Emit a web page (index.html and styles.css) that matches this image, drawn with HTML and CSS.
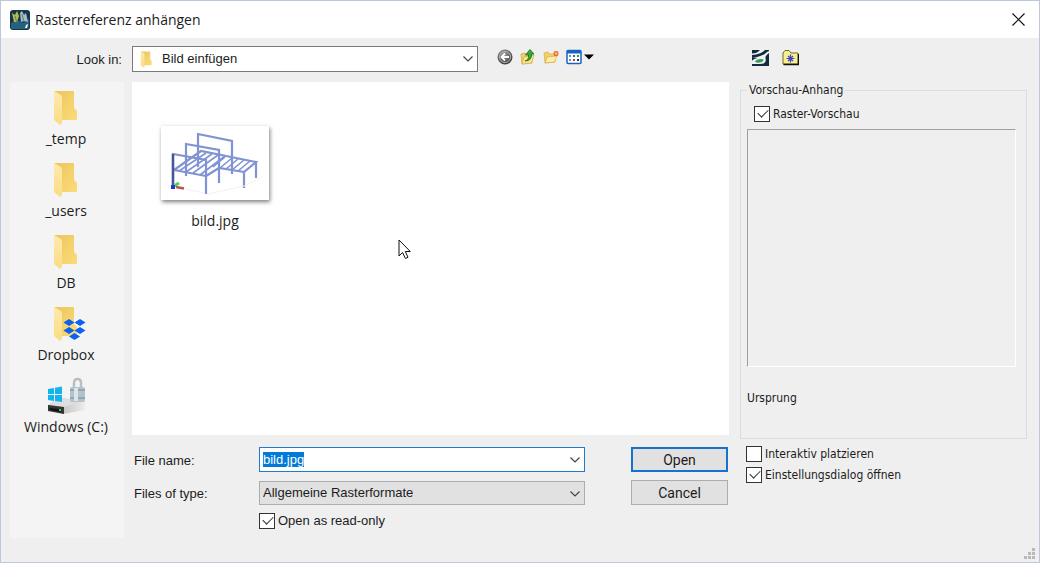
FILE: index.html
```html
<!DOCTYPE html>
<html lang="de">
<head>
  <meta charset="UTF-8" />
  <meta name="viewport" content="width=device-width, initial-scale=1.0" />
  <title>Rasterreferenz anhängen</title>
  <link rel="stylesheet" href="styles.css">
</head>
<body>

  <!-- shared shapes -->
  <svg class="defs" width="0" height="0" aria-hidden="true">
    <defs>
      <linearGradient id="folderBack" x1="0" y1="0" x2="1" y2="1">
        <stop offset="0" stop-color="#ecc55c" />
        <stop offset="1" stop-color="#fbdc7a" />
      </linearGradient>
      <linearGradient id="folderFront" x1="0" y1="0" x2="0" y2="1">
        <stop offset="0" stop-color="#fdeab0" />
        <stop offset="1" stop-color="#fbdc80" />
      </linearGradient>
      <radialGradient id="ball" cx="0.4" cy="0.3" r="0.8">
        <stop offset="0" stop-color="#a5a5a5" />
        <stop offset="1" stop-color="#303030" />
      </radialGradient>
      <linearGradient id="drive" x1="0" y1="0" x2="1" y2="0">
        <stop offset="0" stop-color="#aaaaaa" />
        <stop offset="1" stop-color="#ededed" />
      </linearGradient>
      <symbol id="folder" viewBox="0 0 24 36">
        <path d="M1 1H21V18L24 21V30H7Z" fill="url(#folderBack)" />
        <path d="M1 1L8 5Q9 6 9 8V33L7 35L1 30Z" fill="url(#folderFront)" />
      </symbol>
      <symbol id="chevron" viewBox="0 0 10 6">
        <path d="M0.5 0.5L5 5L9.5 0.5" fill="none" stroke="#444" stroke-width="1.2" />
      </symbol>
    </defs>
  </svg>

  <main class="dialog">
    <header class="titlebar">
      <svg class="app-icon" viewBox="0 0 20 20">
        <rect width="20" height="20" rx="3" fill="#14364a" />
        <path d="M1 13L7 10L13 13L19 9V17Q19 19 17 19H3Q1 19 1 17Z" fill="#24617c" />
        <path d="M2 3L5 5L7 1L9 6L7 12L4 12Z" fill="#b7bc4c" />
        <path d="M10 3L12 1L14 5L16 3L18 12L14 11L11 12Z" fill="#a8bcc8" />
        <path d="M5 6L7 13M12 4L14 12" stroke="#4f7f7d" stroke-width="1" />
        <path d="M15 18L16 15L18 14L17 18Z" fill="#fff" />
      </svg>
      <h1>Rasterreferenz anhängen</h1>
      <button class="close" type="button" aria-label="Close">
        <svg width="13" height="13" viewBox="0 0 13 13"><path d="M0.5 0.5L12.5 12.5M12.5 0.5L0.5 12.5" stroke="#111" stroke-width="1.2" /></svg>
      </button>
    </header>

    <form class="content">
      <label class="look-label" for="lookIn">Look in:</label>

      <div class="toolbar">
        <div class="combo look-in">
          <svg class="combo-icon" width="12" height="17"><use href="#folder" /></svg>
          <select id="lookIn"><option>Bild einfügen</option></select>
          <svg class="arrow" width="10" height="6"><use href="#chevron" /></svg>
        </div>
        <div class="tools">
          <button type="button" aria-label="Back">
            <svg width="16" height="16" viewBox="0 0 16 16">
              <circle cx="8" cy="8" r="7.5" fill="url(#ball)" />
              <circle cx="8" cy="8" r="5.6" fill="none" stroke="#bbb" stroke-width="0.8" />
              <path d="M12 8H5M8 4.5L4.5 8L8 11.5" fill="none" stroke="#fff" stroke-width="1.8" />
            </svg>
          </button>
          <button type="button" aria-label="Up one level">
            <svg width="16" height="16" viewBox="0 0 16 16">
              <path d="M1 5L5 4L6 5H12V14L2 15Z" fill="#f2d065" stroke="#d2a63b" stroke-width="0.7" />
              <path d="M2 15L4 8L14 6L11.5 14Z" fill="#fbe797" stroke="#d2a63b" stroke-width="0.7" />
              <path d="M5 12Q9 11 8.500 6H5.500L10 0.500L14 5H11.500Q12 12 5 12Z" fill="#39a83a" stroke="#147017" stroke-width="0.8" />
            </svg>
          </button>
          <button type="button" aria-label="New folder">
            <svg width="16" height="16" viewBox="0 0 16 16">
              <path d="M1 4L5 3L6 5H12V13L2 14Z" fill="#f2d065" stroke="#d8ab48" stroke-width="0.7" />
              <path d="M2 14L4 8L14 7L11.500 13Z" fill="#fdeeae" stroke="#d8ab48" stroke-width="0.7" />
              <path d="M13 2V7M10.500 4.500H15.500M11 2.500L15 6.500M15 2.500L11 6.500" stroke="#ee6a3d" stroke-width="1.400" />
              <circle cx="13" cy="4.500" r="1.300" fill="#ffc14a" />
            </svg>
          </button>
          <button type="button" aria-label="View">
            <svg width="28" height="16" viewBox="0 0 28 16">
              <rect x="1" y="1.500" width="14" height="13" rx="1" fill="#fff" stroke="#1763c4" stroke-width="1.500" />
              <path d="M1 3H15" stroke="#1763c4" stroke-width="3" />
              <path d="M3 7H5M3 11H5" stroke="#6a94b8" stroke-width="2" />
              <path d="M7 7H9" stroke="#2c63b0" stroke-width="2" />
              <path d="M11 7H13" stroke="#2e9b46" stroke-width="2" />
              <path d="M7 11H9" stroke="#c33a32" stroke-width="2" />
              <path d="M11 11H13" stroke="#1c2f6f" stroke-width="2" />
              <path d="M18 5.500H28L23 10.500Z" fill="#000" />
            </svg>
          </button>
        </div>
      </div>

      <div class="side-tools">
        <button type="button" aria-label="ProjectWise">
          <svg width="17" height="17" viewBox="0 0 17 17">
            <rect y="1" width="17" height="16" fill="#13293d" />
            <path d="M0 4.500Q5 4.500 8 1H13Q10 4.500 4 5.500L0 6Z" fill="#eef3f3" />
            <path d="M0 9Q10 8 15 3L17 2V4Q13 7 13.500 9Q15 15 8 15H0V12Q1 10 6 9Z" fill="#eef3f3" />
            <path d="M3 13Q4 10 9 10Q13 10 10.500 12.500Q8 14.500 3 13Z" fill="#3c9b50" />
          </svg>
        </button>
        <button type="button" aria-label="Favorites">
          <svg width="17" height="17" viewBox="0 0 17 17">
            <path d="M1 15V4L3 1.500H7L9 4H16V15Z" fill="#f8f08c" stroke="#6e6a25" stroke-width="1" />
            <path d="M1.500 15.500H16.500V5" fill="none" stroke="#111" stroke-width="1.300" />
            <path d="M8.500 5.500V13.500M4.500 9.500H12.500M6 7L11 12M11 7L6 12" stroke="#3b42d8" stroke-width="1.200" />
          </svg>
        </button>
      </div>

      <nav class="places">
        <button type="button"><svg width="40" height="38" viewBox="0 0 40 38"><use href="#folder" x="7" y="1" width="24" height="36" /></svg>_temp</button>
        <button type="button"><svg width="40" height="38" viewBox="0 0 40 38"><use href="#folder" x="7" y="1" width="24" height="36" /></svg>_users</button>
        <button type="button"><svg width="40" height="38" viewBox="0 0 40 38"><use href="#folder" x="7" y="1" width="24" height="36" /></svg>DB</button>
        <button type="button">
          <svg width="40" height="38" viewBox="0 0 40 38">
            <use href="#folder" x="7" y="1" width="24" height="36" />
            <path d="M23 14L28.500 17.500L23 21L17.500 17.500ZM34 14L39.500 17.500L34 21L28.500 17.500ZM23 22L28.500 25.500L23 29L17.500 25.500ZM34 22L39.500 25.500L34 29L28.500 25.500ZM28.500 28L34 31.500L28.500 35L23 31.500Z" fill="#0b61f2" />
          </svg>
          Dropbox
        </button>
        <button type="button">
          <svg width="40" height="38" viewBox="0 0 40 38">
            <path d="M2 28L14 21L39 24V33L17 37L2 32Z" fill="url(#drive)" />
            <path d="M2 28L14 21L39 24L18 30Z" fill="#dedede" />
            <path d="M2 28L18 30V37L2 34Z" fill="#353535" />
            <path d="M4 31L15 32.500V35L4 33Z" fill="#111" />
            <rect x="13" y="32" width="2" height="2" fill="#37d35a" />
            <path d="M2 12L8 11V17H2ZM9 10.800L16 9.500V17H9ZM2 18H8V24L2 23ZM9 18H16V25L9 24Z" fill="#10b4ef" />
            <path d="M28 12V6Q28 2 31.500 2Q35 2 35 6V12" fill="none" stroke="#b8bec3" stroke-width="2.500" />
            <rect x="24" y="10" width="15" height="15" rx="2" fill="#b4c2cc" />
            <path d="M24 13H39M24 21H39" stroke="#6b8ca3" stroke-width="1" />
            <rect x="28" y="11" width="4" height="13" fill="#dbe5eb" />
          </svg>
          Windows (C:)
        </button>
      </nav>

      <div class="files">
        <button class="file" type="button">
          <svg class="thumb" width="108" height="74" viewBox="0 0 108 74">
            <rect width="108" height="74" fill="#fff" />
            <g fill="none" stroke="#8093d2" stroke-width="2.200">
              <path d="M37 41V8L71 15V48" />
              <path d="M25 50V18L58 24V57" />
              <path d="M12 60V28L45 34V68" />
              <path d="M13 44L45 50M13 44L40 25L95 36L83 46V62M95 36V52M45 50L58 42L83 46" />
              <path d="M18 45L45 27M25 46L51 28M32 47L57 29M39 49L64 30M52 41L64 31M59 42L71 32M65 43L77 33M71 44L83 34M77 45L89 35" stroke-width="1.600" />
            </g>
            <path d="M12 28V60" stroke="#485691" stroke-width="2.500" />
            <path d="M13 60L18 57" stroke="#4bd34b" stroke-width="3" />
            <path d="M15 61L23 62.500" stroke="#b6564c" stroke-width="2.500" />
            <rect x="10" y="59" width="4" height="4" fill="#2431e0" />
            <path d="M24 63L43 67M47 68L83 60L101 51" stroke="#f2f2f2" stroke-width="1" fill="none" />
          </svg>
          bild.jpg
        </button>
        <svg class="cursor" width="14" height="21" viewBox="0 0 14 21">
          <path d="M1 1V17L4.500 13.500L7.500 19.500L10 18.300L7.300 12.500H12.300Z" fill="#fff" stroke="#111" stroke-width="1" />
        </svg>
      </div>

      <div class="fields">
        <label for="fileName">File name:</label>
        <div class="combo active">
          <input id="fileName" type="text" value="bild.jpg" autocomplete="off">
          <svg class="arrow" width="10" height="6"><use href="#chevron" /></svg>
        </div>
        <button class="btn default" type="submit">Open</button>

        <label for="fileType">Files of type:</label>
        <div class="combo grey">
          <select id="fileType"><option>Allgemeine Rasterformate</option></select>
          <svg class="arrow" width="10" height="6"><use href="#chevron" /></svg>
        </div>
        <button class="btn" type="button">Cancel</button>

        <label class="check read-only"><input type="checkbox" checked>Open as read-only</label>
      </div>

      <aside class="side">
        <fieldset>
          <legend>Vorschau-Anhang</legend>
          <label class="check"><input type="checkbox" checked>Raster-Vorschau</label>
          <div class="preview"></div>
          <p>Ursprung</p>
        </fieldset>
        <div class="options">
          <label class="check"><input type="checkbox">Interaktiv platzieren</label>
          <label class="check"><input type="checkbox" checked>Einstellungsdialog öffnen</label>
        </div>
      </aside>
    </form>

    <svg class="grip" width="12" height="12" viewBox="0 0 12 12">
      <path d="M8 0H11V3H8ZM4 4H7V7H4ZM8 4H11V7H8ZM0 8H3V11H0ZM4 8H7V11H4ZM8 8H11V11H8Z" fill="#b9b9b9" />
    </svg>
  </main>

  <script>
    // file name starts out selected so you can type over it
    const fileName = document.getElementById('fileName');
    fileName.focus();
    fileName.select();

    document.querySelector('form').addEventListener('submit', (e) => e.preventDefault());
  </script>

</body>
</html>
```

FILE: styles.css
```css
* {
  box-sizing: border-box;
}

body {
  margin: 0;
  font-family: "Liberation Sans", Arial, sans-serif;
  font-size: 13px;
  line-height: 16px;
  color: #1c1c1c;
}

button {
  padding: 0;
  border: none;
  background: none;
  font: inherit;
  color: inherit;
}

svg {
  display: block;
  flex: none;
}

.defs {
  position: absolute;
}

.dialog {
  position: relative;
  display: flex;
  flex-direction: column;
  min-height: 100vh;
  border: 1px solid #bcc8d8;
  background: #efefef;
}

/* title bar */
.titlebar {
  display: flex;
  align-items: center;
  height: 37px;
  padding: 0 14px 0 9px;
  background: #fff;
}

.app-icon {
  width: 20px;
  height: 20px;
}

h1 {
  flex: 1;
  margin: 0 0 0 5px;
  font-family: "Open Sans", "Noto Sans", sans-serif;
  font-size: 14px;
  font-weight: normal;
}

.content {
  flex: 1;
  display: grid;
  grid-template-columns: 114px 1fr 290px;
  grid-template-rows: 27px 1fr auto;
  column-gap: 8px;
  padding: 7px 12px 24px 9px;
}

.look-label {
  align-self: center;
  padding: 2px 2px 0 0;
  text-align: right;
}

.toolbar {
  display: flex;
  align-items: center;
}

.tools,
.side-tools {
  display: flex;
  align-items: center;
  gap: 7px;
  padding-bottom: 3px;
}

.tools {
  padding-left: 19px;
}

.side-tools {
  gap: 13px;
  padding-left: 15px;
}

/* drop-downs */
.combo {
  position: relative;
}

.combo select,
.combo input {
  display: block;
  width: 100%;
  height: 25px;
  margin: 0;
  padding: 0 24px 0 3px;
  border: 1px solid #7a7a7a;
  border-radius: 0;
  outline: none;
  appearance: none;
  background: #fff;
  font: inherit;
  color: inherit;
}

.combo.look-in {
  width: 346px;
}

.look-in select {
  height: 26px;
  padding-left: 29px;
}

.combo.active input {
  border-color: #1f7ad1;
}

.combo.grey select {
  height: 24px;
  border-color: #adadad;
  background: #e1e1e1;
}

.combo-icon {
  position: absolute;
  left: 8px;
  top: 5px;
  pointer-events: none;
}

.arrow {
  position: absolute;
  right: 5px;
  top: 10px;
  pointer-events: none;
}

input::selection {
  background: rgba(0, 120, 215, 0.99);
  color: #fff;
}

/* places on the left */
.places {
  grid-row: 2 / 4;
  display: flex;
  flex-direction: column;
  gap: 12px;
  margin-top: 10px;
  padding: 7px 2px 0 0;
  background: #f4f4f4;
  font-family: "Open Sans", "Noto Sans", sans-serif;
  font-size: 14px;
  line-height: 20px;
}

.places button {
  display: flex;
  flex-direction: column;
  align-items: center;
  gap: 2px;
}

/* file list */
.files {
  position: relative;
  margin-top: 10px;
  padding: 44px 29px;
  background: #fff;
  font-family: "Open Sans", "Noto Sans", sans-serif;
  font-size: 14px;
  line-height: 20px;
}

.file {
  display: flex;
  flex-direction: column;
  align-items: center;
  gap: 11px;
}

.thumb {
  box-shadow: 1px 2px 4px rgba(0, 0, 0, 0.5);
}

.cursor {
  position: absolute;
  left: 266px;
  top: 157px;
}

.fields {
  display: grid;
  grid-template-columns: 127px 1fr 97px;
  grid-template-rows: 25px 25px 16px;
  row-gap: 8px;
  align-items: center;
  padding: 12px 1px 9px 0;
}

.fields > label:not(.check) {
  padding: 2px 0 0 2px;
}

.fields .combo {
  margin-right: 46px;
}

.btn {
  height: 25px;
  border: 1px solid #adadad;
  background: #e1e1e1;
  font-family: Roboto, sans-serif;
  font-size: 14px;
}

.btn.default {
  border: 2px solid #1673cb;
}

.read-only {
  grid-column: 2;
}

/* checkboxes */
.check {
  display: flex;
  align-items: center;
  gap: 3px;
}

.check input {
  position: relative;
  flex: none;
  width: 16px;
  height: 16px;
  margin: 0;
  border: 1px solid #333;
  appearance: none;
  background: #fff;
}

.check input:checked::after {
  content: "";
  position: absolute;
  left: 3px;
  top: 2px;
  width: 9px;
  height: 5px;
  border: solid #333;
  border-width: 0 0 1px 1px;
  transform: rotate(-45deg);
}

/* preview side */
.side {
  grid-column: 3;
  grid-row: 2 / 4;
  display: flex;
  flex-direction: column;
  padding: 10px 0 55px 3px;
  font-family: "DejaVu Sans Condensed", "DejaVu Sans", sans-serif;
  font-size: 12px;
}

fieldset {
  flex: 1;
  display: flex;
  flex-direction: column;
  min-width: 0;
  margin: 0;
  padding: 8px 10px 32px 6px;
  border: 1px solid #dcdcdc;
}

legend {
  padding: 0 2px;
}

fieldset .check {
  padding-left: 7px;
}

.preview {
  flex: 1;
  margin-top: 7px;
  border: 1px solid;
  border-color: #a0a0a0 #fff #fff #a0a0a0;
}

fieldset p {
  margin: 23px 0 0;
}

.options {
  display: flex;
  flex-direction: column;
  gap: 5px;
  padding: 7px 0 0 6px;
}

.grip {
  position: absolute;
  right: 3px;
  bottom: 2px;
}
```
